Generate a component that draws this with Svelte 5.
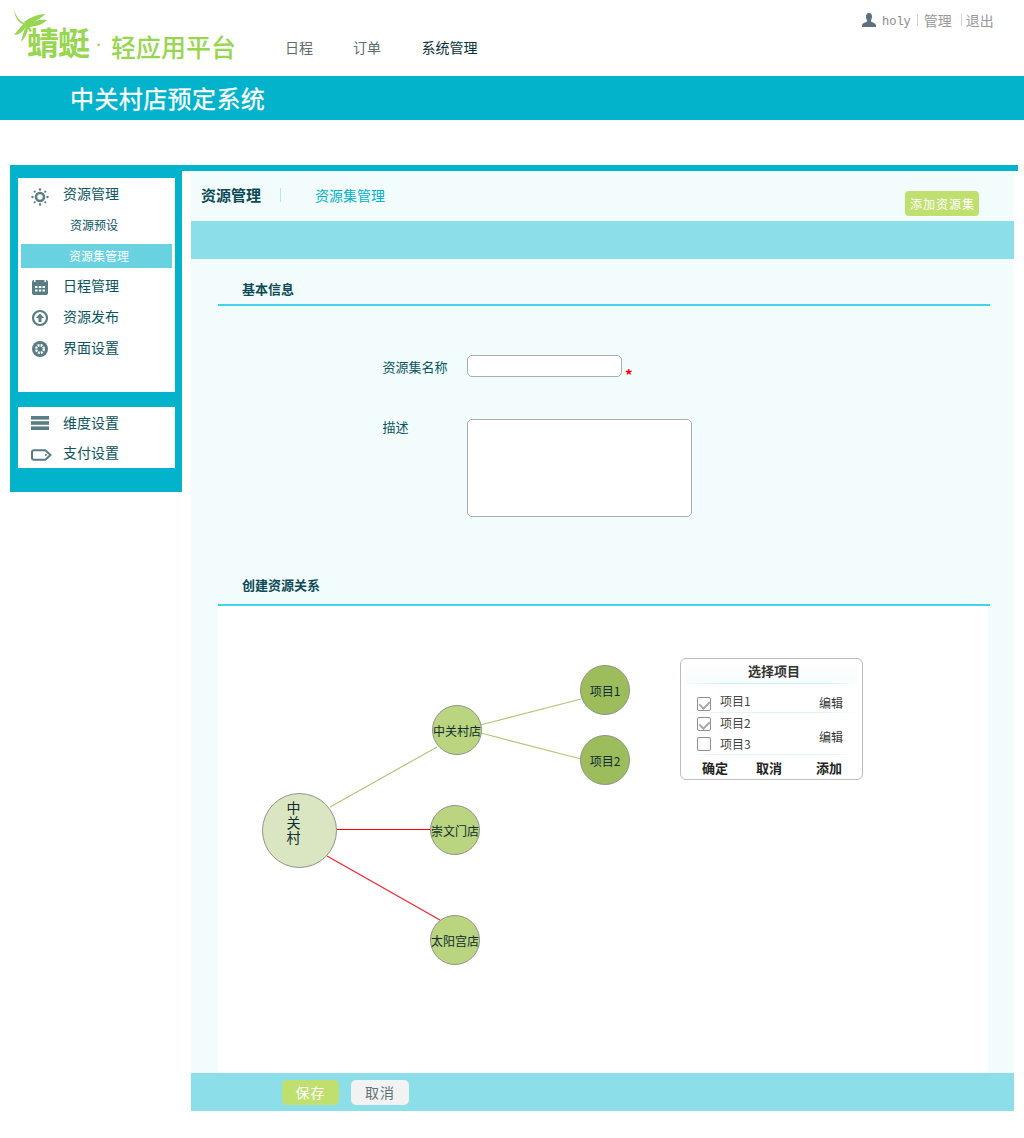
<script>
  const nav = [
    { label: '日程' },
    { label: '订单' },
    { label: '系统管理', active: true }
  ];
  const nodes = [
    { label: '中关村店', x: 214, y: 99, cls: 'mid' },
    { label: '崇文门店', x: 212, y: 199, cls: 'mid' },
    { label: '太阳宫店', x: 212, y: 309, cls: 'mid' },
    { label: '项目1', x: 362, y: 59, cls: 'leaf' },
    { label: '项目2', x: 362, y: 129, cls: 'leaf' }
  ];
  const lines = [
    { x1: 112, y1: 201, x2: 219, y2: 141, c: '#b0c878', w: 1.2 },
    { x1: 262, y1: 119, x2: 363, y2: 93, c: '#b0c878', w: 1.2 },
    { x1: 263, y1: 127, x2: 363, y2: 153, c: '#b0c878', w: 1.2 },
    { x1: 119, y1: 223.5, x2: 212, y2: 223.5, c: '#f00', w: 1 },
    { x1: 109, y1: 250, x2: 222, y2: 314, c: '#f5222d', w: 1.2 }
  ];
</script>

<div class="page">
  <header class="top">
    <div class="logo">
      <svg class="fly" viewBox="0 0 40 36" width="40" height="36" aria-hidden="true">
        <g fill="#97d64f">
          <path d="M0.500 0 C1 5 4 11 10 14 L11 16 C4 14 0 7 0.500 0 Z"/>
          <path d="M10 13 C15 9 24 5 31 5 C28 9 20 13 12 16 Z"/>
          <path d="M12 16 C18 12 26 10 33 11 C28 16 20 18 14 18 Z"/>
          <path d="M10 14 C7 18 3 22 0 26 C5 26 9 23 12 17 Z"/>
          <path d="M12 16 C10 22 8 28 7 33 C11 29 14 24 14 18 Z"/>
          <path d="M10 14 L13 14 L18 22 L16 23 Z"/>
        </g>
      </svg>
      <span class="fly-name">蜻蜓</span>
      <span class="dot">·</span>
      <span class="slogan">轻应用平台</span>
    </div>
    <nav class="nav">
      {#each nav as n}
        <span class:active={n.active}>{n.label}</span>
      {/each}
    </nav>
    <div class="user">
      <svg viewBox="0 0 14 14" width="14" height="14" aria-hidden="true">
        <path d="M7 0 C9.300 0 10 1.800 10 3.800 C10 5.800 9 7 8.800 8 C9 9.300 13 9.600 14 12 L14 14 L0 14 L0 12 C1 9.600 5 9.300 5.200 8 C5 7 4 5.800 4 3.800 C4 1.800 4.700 0 7 0 Z" fill="#5d7080"/>
      </svg>
      <span class="uname">holy</span>
      <span class="ulink manage">管理</span>
      <span class="ulink quit">退出</span>
    </div>
  </header>

  <div class="banner">中关村店预定系统</div>

  <div class="main">
    <aside class="side">
      <div class="panel first">
        <div class="item">
          <svg viewBox="0 0 18 18" width="18" height="18" aria-hidden="true">
            <circle cx="9" cy="9" r="4" fill="none" stroke="#5a7c84" stroke-width="2.500"/>
            <g fill="#5a7c84"><circle cx="9" cy="1.500" r="1.200"/><circle cx="9" cy="16.500" r="1.200"/><circle cx="1.500" cy="9" r="1.200"/><circle cx="16.500" cy="9" r="1.200"/><circle cx="3.700" cy="3.700" r="1.100"/><circle cx="14.300" cy="3.700" r="1.100"/><circle cx="3.700" cy="14.300" r="1.100"/><circle cx="14.300" cy="14.300" r="1.100"/></g>
          </svg>
          <span>资源管理</span>
        </div>
        <div class="sub">资源预设</div>
        <div class="sub current">资源集管理</div>
        <div class="item">
          <svg viewBox="0 0 18 18" width="18" height="18" aria-hidden="true">
            <rect x="1" y="2" width="16" height="15" rx="2" fill="#5a7c84"/>
            <g fill="#fff"><rect x="4" y="8" width="2.500" height="2"/><rect x="7.800" y="8" width="2.500" height="2"/><rect x="11.500" y="8" width="2.500" height="2"/><rect x="4" y="11.500" width="2.500" height="2"/><rect x="7.800" y="11.500" width="2.500" height="2"/><rect x="11.500" y="11.500" width="2.500" height="2"/><rect x="3" y="1" width="1.500" height="3"/><rect x="13.500" y="1" width="1.500" height="3"/></g>
          </svg>
          <span>日程管理</span>
        </div>
        <div class="item">
          <svg viewBox="0 0 18 18" width="18" height="18" aria-hidden="true">
            <circle cx="9" cy="9" r="7" fill="none" stroke="#5a7c84" stroke-width="2.200"/>
            <path d="M9 4.500 L13 9 L10.500 9 L10.500 13 L7.500 13 L7.500 9 L5 9 Z" fill="#5a7c84"/>
          </svg>
          <span>资源发布</span>
        </div>
        <div class="item">
          <svg viewBox="0 0 18 18" width="18" height="18" aria-hidden="true">
            <circle cx="9" cy="9" r="8" fill="#5a7c84"/>
            <circle cx="9" cy="9" r="3.800" fill="none" stroke="#fff" stroke-width="2.400" stroke-dasharray="2 1"/>
            <circle cx="9" cy="9" r="1.800" fill="#5a7c84"/>
          </svg>
          <span>界面设置</span>
        </div>
      </div>
      <div class="panel second">
        <div class="item">
          <svg viewBox="0 0 18 14" width="18" height="14" aria-hidden="true">
            <g fill="#5a7c84"><rect y="0" width="18" height="3.600"/><rect y="5.200" width="18" height="3.600"/><rect y="10.400" width="18" height="3.600"/></g>
          </svg>
          <span>维度设置</span>
        </div>
        <div class="item">
          <svg class="tag" viewBox="0 0 22 12" width="21" height="12" aria-hidden="true">
            <path d="M3 1 L15 1 L20.500 6 L15 11 L3 11 C1.800 11 1 10.200 1 9 L1 3 C1 1.800 1.800 1 3 1 Z" fill="none" stroke="#5a7c84" stroke-width="2.200"/>
            <circle cx="15.500" cy="6" r="1.100" fill="#5a7c84"/>
          </svg>
          <span>支付设置</span>
        </div>
      </div>
    </aside>

    <section class="content">
      <div class="tabs">
        <span class="tab strong">资源管理</span>
        <span class="tab link">资源集管理</span>
        <button class="add">添加资源集</button>
      </div>
      <div class="bar"></div>

      <h3 class="heading basic">基本信息</h3>

      <div class="row name">
        <label for="n">资源集名称</label>
        <input id="n" type="text" />
        <span class="req">*</span>
      </div>
      <div class="row desc">
        <label for="d">描述</label>
        <textarea id="d"></textarea>
      </div>

      <h3 class="heading rel">创建资源关系</h3>

      <div class="canvas">
        <svg class="wires" width="770" height="467" aria-hidden="true">
          {#each lines as l}
            <line x1={l.x1} y1={l.y1} x2={l.x2} y2={l.y2} stroke={l.c} stroke-width={l.w} />
          {/each}
        </svg>
        <div class="node root">中<br />关<br />村</div>
        {#each nodes as n}
          <div class="node {n.cls}" style="left:{n.x}px;top:{n.y}px">{n.label}</div>
        {/each}

        <div class="picker">
          <div class="p-title">选择项目</div>
          <div class="p-group one">
            <div class="p-line">
              <span class="box on"></span><span class="p-name">项目1</span><span class="p-edit">编辑</span>
            </div>
          </div>
          <div class="p-group two">
            <div class="p-col">
              <div class="p-line"><span class="box on"></span><span class="p-name">项目2</span></div>
              <div class="p-line"><span class="box"></span><span class="p-name">项目3</span></div>
            </div>
            <span class="p-edit">编辑</span>
          </div>
          <div class="p-actions"><b>确定</b><b>取消</b><b>添加</b></div>
        </div>
      </div>

      <div class="foot">
        <button class="save">保存</button>
        <button class="cancel">取消</button>
      </div>
    </section>
  </div>
</div>

<style>
  :global(body) { margin: 0; background: #fff; }
  .page {
    width: 1024px;
    height: 1138px;
    overflow: hidden;
    font-family: "Noto Sans CJK SC", "Liberation Sans", sans-serif;
    font-size: 14px;
    color: #0b5560;
  }
  .top { position: relative; height: 76px; display: flex; }
  .logo { position: relative; width: 285px; flex: none; color: #97d64f; }
  .fly { position: absolute; left: 14px; top: 9px; }
  .fly-name { position: absolute; left: 27px; top: 23px; font-size: 32px; line-height: 36px; font-weight: 700; letter-spacing: -1px; }
  .dot { position: absolute; left: 95px; top: 29px; font-family: "Liberation Sans", sans-serif; font-size: 22px; line-height: 30px; }
  .slogan { position: absolute; left: 111px; top: 31px; font-size: 25px; line-height: 30px; font-weight: 500; white-space: nowrap; }
  .nav { display: flex; gap: 40px; padding-top: 37px; font-size: 14px; line-height: 20px; color: #5e6b70; }
  .nav .active { color: #07323a; margin-left: 0.5px; }
  .user { position: absolute; left: 862px; top: 11px; display: flex; align-items: center; height: 18px; color: #999; }
  .uname { font-family: "Liberation Mono", monospace; font-size: 12px; margin: 3px 0 0 6px; color: #8a8a8a; }
  .ulink { font-size: 14px; position: relative; }
  .manage { margin-left: 6px; padding-left: 7px; }
  .quit { margin-left: 9px; padding-left: 5px; }
  .ulink::before { content: ""; position: absolute; left: 0; top: 4px; height: 12px; width: 1px; background: #d5d5d5; }

  .banner {
    height: 44px;
    background: #03b3cb;
    color: #fff;
    padding-left: 70px;
    font-size: 24px;
    letter-spacing: 0.4px;
    line-height: 43px;
    box-sizing: border-box;
    -webkit-text-stroke: 0.3px #fff;
  }

  .main {
    margin: 45px 0 0 10px;
    width: 1008px;
    border-top: 6px solid #03b3cb;
    display: flex;
    align-items: flex-start;
  }
  .side {
    width: 172px;
    height: 321px;
    flex: none;
    background: #03b3cb;
    box-sizing: border-box;
    padding: 7px 7px 0 8px;
  }
  .panel { background: #fff; }
  .first { height: 214px; }
  .second { height: 61px; margin-top: 15px; }
  .item {
    display: flex;
    align-items: center;
    height: 31px;
    font-size: 14px;
    position: relative;
    padding-left: 45px;
  }
  .first .item:first-child { height: 30px; padding-bottom: 2px; }
  .second .item { height: 30px; }
  .item svg { position: absolute; left: 13px; top: calc(50% + 2px); transform: translateY(-50%); }
  .first .item:first-child svg { top: calc(50% + 3px); }
  .second .item svg { top: calc(50% + 1px); }
  .second .item svg.tag { top: calc(50% + 3px); }
  .sub { height: 30px; font-size: 12px; line-height: 30px; padding-left: 52px; }
  .current {
    margin: 4px 3px 1px;
    height: 24px;
    line-height: 24px;
    background: #68d2e0;
    color: #fff;
    padding-left: 48px;
  }

  .content {
    margin-left: 9px;
    width: 823px;
    height: 940px;
    background: #f2fcfd;
    display: flex;
    flex-direction: column;
    position: relative;
  }
  .tabs { height: 50px; flex: none; display: flex; position: relative; padding-left: 10px; }
  .tab { line-height: 20px; padding-top: 14px; }
  .strong { font-size: 15px; font-weight: 700; color: #0b4a55; position: relative; padding-right: 20px; }
  .strong::after { content: ""; position: absolute; right: 0; top: 17px; height: 14px; width: 1px; background: #b9e4ea; }
  .link { font-size: 14px; color: #03b3cb; margin-left: 34px; }
  .add {
    position: absolute;
    left: 714px;
    top: 20px;
    width: 74px;
    height: 25px;
    padding: 0 0 0 1px;
    border: 0;
    border-radius: 4px;
    background: #bfe06f;
    color: #fff;
    font: 12px/25px "Noto Sans CJK SC", sans-serif;
    letter-spacing: 1px;
  }
  .bar { height: 38px; flex: none; background: #8cdfe9; }

  .heading {
    margin: 0 24px 0 27px;
    border-bottom: 2px solid #43d4e6;
    padding-left: 24px;
    font-size: 13px;
    font-weight: 700;
    line-height: 20px;
    color: #0b4a55;
  }
  .basic { margin-top: 20px; padding-bottom: 5px; }
  .rel { margin-top: 58px; padding-bottom: 9px; }

  .row { display: flex; padding-left: 191px; align-items: flex-start; position: relative; }
  .row label { width: 84.5px; padding-left: 0.5px; flex: none; font-size: 13px; line-height: 20px; }
  .name { margin-top: 49px; }
  .name label { padding-top: 2px; }
  .desc { margin-top: 34px; }
  .desc label { margin-top: -2px; }
  input, textarea {
    box-sizing: border-box;
    display: block;
    border: 1px solid #a8adad;
    border-radius: 5px;
    background: #fff;
    padding: 0;
    margin: 0;
    outline: none;
    resize: none;
  }
  input { width: 155px; height: 22px; }
  textarea { width: 225px; height: 98px; }
  .req { color: #f00; font-size: 15px; font-weight: 700; line-height: 20px; margin: 10px 0 0 3px; }

  .canvas {
    position: relative;
    margin: 0 26px 0 27px;
    flex: 1;
    background: #fff;
  }
  .wires { position: absolute; left: 0; top: 0; }
  .node {
    position: absolute;
    box-sizing: border-box;
    width: 50px;
    height: 50px;
    border: 1px solid #8f958c;
    border-radius: 50%;
    display: flex;
    align-items: center;
    justify-content: center;
    text-align: center;
    white-space: nowrap;
    font-size: 12px;
    color: #0e2c2f;
  }
  .mid { background: #bbd47f; }
  .leaf { background: #9dbc5c; }
  .root {
    left: 44px;
    top: 187px;
    width: 75px;
    height: 75px;
    background: #dae6c1;
    font-size: 14px;
    line-height: 15px;
    align-items: flex-start;
    padding: 6px 12px 0 0;
  }

  .picker {
    position: absolute;
    left: 462px;
    top: 52px;
    width: 183px;
    height: 122px;
    box-sizing: border-box;
    background: #fff;
    border: 1px solid #bcbcbc;
    border-radius: 6px;
    padding: 0 5px;
    color: #444;
    font-size: 12px;
  }
  .p-title {
    height: 24px;
    line-height: 24px;
    padding-left: 5px;
    text-align: center;
    font-size: 13px;
    font-weight: 700;
    color: #333;
    border-bottom: 1px solid;
    border-image: linear-gradient(to right, transparent, #cdeef3 20%, #cdeef3 80%, transparent) 1;
    background: linear-gradient(#fff, #f7fcfd);
  }
  .p-group {
    position: relative;
    border-bottom: 1px solid;
    border-image: linear-gradient(to right, transparent, #e3f4f6 20%, #e3f4f6 80%, transparent) 1;
  }
  .one { height: 28px; }
  .two { height: 41px; display: flex; align-items: center; }
  .p-col { display: flex; flex-direction: column; }
  .p-line { display: flex; align-items: center; height: 20px; padding-left: 11px; }
  .one .p-line { height: 28px; padding-top: 12px; box-sizing: border-box; }
  .one .p-name { margin-top: -6px; }
  .two .p-line:first-child .p-name { margin-top: -2px; }
  .box {
    display: block;
    width: 14px;
    height: 14px;
    box-sizing: border-box;
    border: 1px solid #8e8e8e;
    border-radius: 2px;
    background: #fff;
    flex: none;
    position: relative;
  }
  .box.on::after {
    content: "";
    position: absolute;
    left: 3px;
    top: 1px;
    width: 5px;
    height: 8px;
    border: solid #a9a9a9;
    border-width: 0 2px 2px 0;
    transform: rotate(45deg);
  }
  .p-name { margin-left: 9px; line-height: 20px; }
  .p-edit { position: absolute; left: 133px; line-height: 20px; color: #333; }
  .one .p-edit { top: 9px; }
  .two .p-edit { top: 14px; }
  .p-actions { display: flex; padding-top: 3px; line-height: 20px; font-size: 13px; color: #222; }
  .p-actions b:nth-child(1) { margin-left: 16px; }
  .p-actions b:nth-child(2) { margin-left: 28px; }
  .p-actions b:nth-child(3) { margin-left: 34px; }

  .foot {
    height: 38px;
    flex: none;
    background: #8cdfe9;
    display: flex;
    gap: 12px;
    padding: 7px 0 0 91px;
    box-sizing: border-box;
    align-items: flex-start;
  }
  .foot button {
    height: 25px;
    padding: 0;
    border: 0;
    border-radius: 5px;
    font: 14px/25px "Noto Sans CJK SC", sans-serif;
    letter-spacing: 1px;
  }
  .save { width: 57px; background: #bfe06f; color: #fff; }
  .cancel { width: 58px; background: #f2f2f2; color: #5f7377; }
</style>
